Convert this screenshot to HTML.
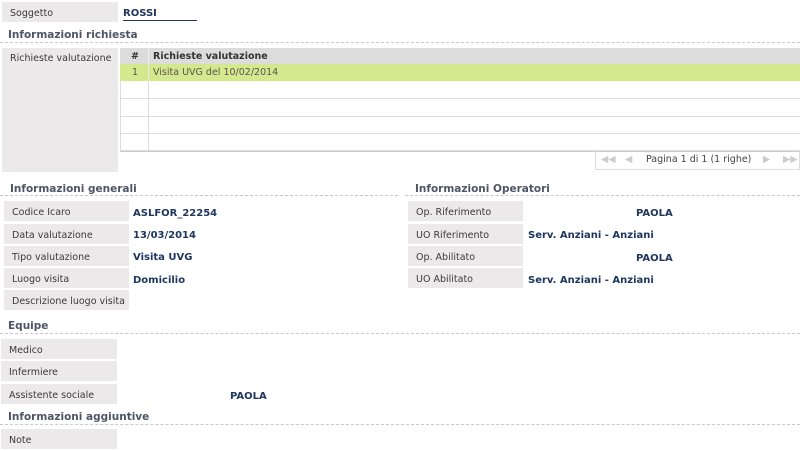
<!DOCTYPE html>
<html><head><meta charset="utf-8"><style>
body{margin:0;width:800px;height:449px;background:#fff;position:relative;overflow:hidden;font-family:"DejaVu Sans","Liberation Sans",sans-serif;font-size:9.5px;color:#333}
.a{position:absolute;white-space:nowrap}
.lb{position:absolute;background:#ebe9e9;padding-left:8px;padding-top:2px;box-sizing:border-box;line-height:20px;color:#3a3a3a}
.h{position:absolute;font-weight:bold;font-size:10.5px;color:#4e5566;white-space:nowrap}
.d{position:absolute;height:0;border-top:1px dashed #c8c8c8}
.v{position:absolute;font-weight:bold;font-size:10px;color:#1f3660;white-space:nowrap;margin-top:2px}
.r{position:absolute;left:120px;width:680px;height:17px;border-bottom:1px solid #ddd}
.r i{position:absolute;left:28px;top:0;bottom:0;border-left:1px solid #ddd}
</style></head><body>
<div class="lb" style="left:2px;top:2px;width:116px;height:20px">Soggetto</div>
<div class="v" style="left:123px;top:6px;border-bottom:1px solid #1f3660;width:74px;line-height:12px">ROSSI</div>
<div class="h" style="left:8px;top:29px">Informazioni richiesta</div>
<div class="d" style="left:0;top:42px;width:800px"></div>
<div class="lb" style="left:2px;top:48px;width:116px;height:124px;line-height:18px">Richieste valutazione</div>
<div class="a" style="left:120px;top:48px;width:680px;height:103px;border-left:1px solid #ddd;border-bottom:1px solid #ccc"></div>
<div class="a" style="left:120px;top:48px;width:680px;height:16px;background:#dcdcdc;font-weight:bold;line-height:17px;color:#333"><span style="position:absolute;left:11px">#</span><span style="position:absolute;left:33px">Richieste valutazione</span><i style="position:absolute;left:28px;top:0;bottom:0;border-left:1px solid #eee"></i></div>
<div class="a" style="left:120px;top:64px;width:680px;height:17px;background:#d4e88e;line-height:18px;color:#555"><span style="position:absolute;left:12px">1</span><span style="position:absolute;left:33px">Visita UVG del 10/02/2014</span><i style="position:absolute;left:28px;top:0;bottom:0;border-left:1px solid #e8e8e8"></i></div>
<div class="r" style="top:81px"><i></i></div>
<div class="r" style="top:99px"><i></i></div>
<div class="r" style="top:116px"><i></i></div>
<div class="r" style="top:134px;height:16px"><i></i></div>
<div class="a" style="left:595px;top:151px;width:205px;height:19px;border:1px solid #ddd;border-top:none;box-sizing:border-box;line-height:18px;color:#444"><span style="position:absolute;left:5px;color:#ccc">◀◀</span><span style="position:absolute;left:29px;color:#ccc">◀</span><span style="position:absolute;left:50px">Pagina 1 di 1 (1 righe)</span><span style="position:absolute;left:167px;color:#ccc">▶</span><span style="position:absolute;left:187px;color:#ccc">▶▶</span></div>
<div class="h" style="left:10px;top:183px">Informazioni generali</div>
<div class="d" style="left:0;top:195px;width:398px"></div>
<div class="h" style="left:415px;top:183px">Informazioni Operatori</div>
<div class="d" style="left:405px;top:195px;width:395px"></div>
<div class="lb" style="left:4px;top:201px;width:125px;height:20px">Codice Icaro</div>
<div class="lb" style="left:4px;top:224px;width:125px;height:20px">Data valutazione</div>
<div class="lb" style="left:4px;top:246px;width:125px;height:20px">Tipo valutazione</div>
<div class="lb" style="left:4px;top:268px;width:125px;height:20px">Luogo visita</div>
<div class="lb" style="left:4px;top:290px;width:125px;height:20px">Descrizione luogo visita</div>
<div class="v" style="left:133px;top:206px">ASLFOR_22254</div>
<div class="v" style="left:133px;top:228px">13/03/2014</div>
<div class="v" style="left:133px;top:250px">Visita UVG</div>
<div class="v" style="left:133px;top:273px">Domicilio</div>
<div class="lb" style="left:408px;top:201px;width:115px;height:20px">Op. Riferimento</div>
<div class="lb" style="left:408px;top:224px;width:115px;height:20px">UO Riferimento</div>
<div class="lb" style="left:408px;top:246px;width:115px;height:20px">Op. Abilitato</div>
<div class="lb" style="left:408px;top:268px;width:115px;height:20px">UO Abilitato</div>
<div class="v" style="left:636px;top:206px">PAOLA</div>
<div class="v" style="left:528px;top:228px">Serv. Anziani - Anziani</div>
<div class="v" style="left:636px;top:251px">PAOLA</div>
<div class="v" style="left:528px;top:273px">Serv. Anziani - Anziani</div>
<div class="h" style="left:8px;top:320px">Equipe</div>
<div class="d" style="left:0;top:333px;width:800px"></div>
<div class="lb" style="left:1px;top:339px;width:116px;height:20px">Medico</div>
<div class="lb" style="left:1px;top:361px;width:116px;height:20px">Infermiere</div>
<div class="lb" style="left:1px;top:384px;width:116px;height:20px">Assistente sociale</div>
<div class="v" style="left:230px;top:389px">PAOLA</div>
<div class="h" style="left:8px;top:411px">Informazioni aggiuntive</div>
<div class="d" style="left:0;top:424px;width:800px"></div>
<div class="lb" style="left:1px;top:429px;width:116px;height:20px">Note</div>
</body></html>
